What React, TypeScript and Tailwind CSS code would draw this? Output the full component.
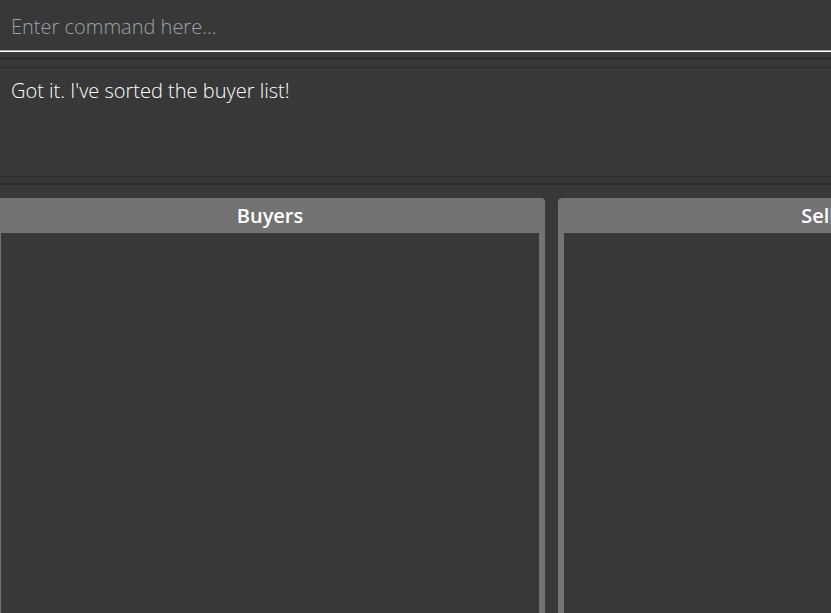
import React from 'react';

const font = { fontFamily: '"Open Sans", "Segoe UI", sans-serif' };

function Panel({ title }: { title: string }) {
  return (
    <div className="flex w-[550px] shrink-0 flex-col rounded-t-[4px] bg-[#737373] px-[6px]">
      <div className="flex h-[35px] items-center justify-center text-[20px] font-semibold text-white">
        {title}
      </div>
      <div className="h-[420px] bg-[#383838]" />
    </div>
  );
}

export default function App() {
  return (
    <div className="h-[613px] w-[831px] overflow-hidden bg-[#383838]" style={font}>
      {/* command box */}
      <div className="flex h-[50px] items-center pl-[11px] pt-[3px] text-[20px] font-light text-[#9aa3ab]">
        Enter command here...
      </div>
      <div className="h-px bg-[#a8a8a8]" />
      <div className="h-px bg-white" />

      <div className="h-[5px]" />
      <div className="h-[3px] bg-[#2c2c2c]" />
      <div className="h-[7px]" />
      <div className="h-px bg-[#2c2c2c]" />

      {/* result display */}
      <div className="h-[108px] pl-[11px] pt-[9px] text-[20px] font-light leading-[28px] text-white">
        Got it. I've sorted the buyer list!
      </div>
      <div className="h-px bg-[#2c2c2c]" />
      <div className="h-[6px]" />
      <div className="h-[2px] bg-[#2c2c2c]" />
      <div className="h-[13px]" />

      {/* lists */}
      <div className="ml-[-5px] flex gap-[13px]">
        <Panel title="Buyers" />
        <Panel title="Sellers" />
      </div>
    </div>
  );
}
